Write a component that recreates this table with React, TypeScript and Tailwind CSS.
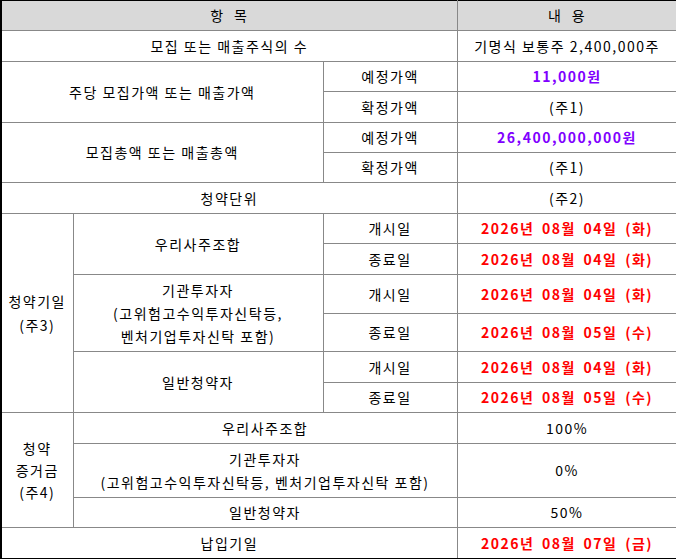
import React from 'react'

const cell = 'border border-[#888888] text-center align-middle p-0'
const red = 'text-[#ff0000] font-bold [word-spacing:3px]'
const purple = 'text-[#8000ff] font-bold'

export default function App() {
  return (
    <div className="w-[676px] bg-white font-['Noto_Sans_CJK_KR','Noto_Sans',sans-serif] text-[14px] leading-[23px] tracking-[1.5px] text-black">
      <table className="w-[676px] table-fixed border-collapse border-t border-r border-b border-l-2 border-black">
        <colgroup>
          <col className="w-[72px]" />
          <col className="w-[250px]" />
          <col className="w-[134px]" />
          <col className="w-[220px]" />
        </colgroup>
        <tbody>
          <tr className="h-[30px] bg-[#d9d9d9]">
            <td colSpan={3} className={`${cell} border-t-black border-l-black`}>항&nbsp;&nbsp;목</td>
            <td className={`${cell} border-t-black border-r-black`}>내&nbsp;&nbsp;용</td>
          </tr>
          <tr className="h-[31px]">
            <td colSpan={3} className={`${cell} border-l-black`}>모집 또는 매출주식의 수</td>
            <td className={`${cell} border-r-black`}>기명식 보통주 2,400,000주</td>
          </tr>
          <tr className="h-[30px]">
            <td colSpan={2} rowSpan={2} className={`${cell} border-l-black`}>주당 모집가액 또는 매출가액</td>
            <td className={cell}>예정가액</td>
            <td className={`${cell} border-r-black ${purple}`}>11,000원</td>
          </tr>
          <tr className="h-[31px]">
            <td className={cell}>확정가액</td>
            <td className={`${cell} border-r-black`}>(주1)</td>
          </tr>
          <tr className="h-[30px]">
            <td colSpan={2} rowSpan={2} className={`${cell} border-l-black`}>모집총액 또는 매출총액</td>
            <td className={cell}>예정가액</td>
            <td className={`${cell} border-r-black ${purple}`}>26,400,000,000원</td>
          </tr>
          <tr className="h-[30px]">
            <td className={cell}>확정가액</td>
            <td className={`${cell} border-r-black`}>(주1)</td>
          </tr>
          <tr className="h-[31px]">
            <td colSpan={3} className={`${cell} border-l-black`}>청약단위</td>
            <td className={`${cell} border-r-black`}>(주2)</td>
          </tr>
          <tr className="h-[30px]">
            <td rowSpan={6} className={`${cell} border-l-black leading-[24px]`}>
              청약기일
              <br />
              (주3)
            </td>
            <td rowSpan={2} className={cell}>우리사주조합</td>
            <td className={cell}>개시일</td>
            <td className={`${cell} border-r-black ${red}`}>2026년 08월 04일 (화)</td>
          </tr>
          <tr className="h-[31px]">
            <td className={cell}>종료일</td>
            <td className={`${cell} border-r-black ${red}`}>2026년 08월 04일 (화)</td>
          </tr>
          <tr className="h-[39px]">
            <td rowSpan={2} className={cell}>
              기관투자자
              <br />
              (고위험고수익투자신탁등,
              <br />
              벤처기업투자신탁 포함)
            </td>
            <td className={cell}>개시일</td>
            <td className={`${cell} border-r-black ${red}`}>2026년 08월 04일 (화)</td>
          </tr>
          <tr className="h-[38px]">
            <td className={cell}>종료일</td>
            <td className={`${cell} border-r-black ${red}`}>2026년 08월 05일 (수)</td>
          </tr>
          <tr className="h-[31px]">
            <td rowSpan={2} className={cell}>일반청약자</td>
            <td className={cell}>개시일</td>
            <td className={`${cell} border-r-black ${red}`}>2026년 08월 04일 (화)</td>
          </tr>
          <tr className="h-[30px]">
            <td className={cell}>종료일</td>
            <td className={`${cell} border-r-black ${red}`}>2026년 08월 05일 (수)</td>
          </tr>
          <tr className="h-[31px]">
            <td rowSpan={3} className={`${cell} border-l-black leading-[22px]`}>
              청약
              <br />
              증거금
              <br />
              (주4)
            </td>
            <td colSpan={2} className={cell}>우리사주조합</td>
            <td className={`${cell} border-r-black`}>100%</td>
          </tr>
          <tr className="h-[54px]">
            <td colSpan={2} className={cell}>
              기관투자자
              <br />
              (고위험고수익투자신탁등, 벤처기업투자신탁 포함)
            </td>
            <td className={`${cell} border-r-black`}>0%</td>
          </tr>
          <tr className="h-[30px]">
            <td colSpan={2} className={cell}>일반청약자</td>
            <td className={`${cell} border-r-black`}>50%</td>
          </tr>
          <tr className="h-[31px]">
            <td colSpan={3} className={`${cell} border-l-black border-b-black`}>납입기일</td>
            <td className={`${cell} border-r-black border-b-black ${red}`}>2026년 08월 07일 (금)</td>
          </tr>
        </tbody>
      </table>
    </div>
  )
}
